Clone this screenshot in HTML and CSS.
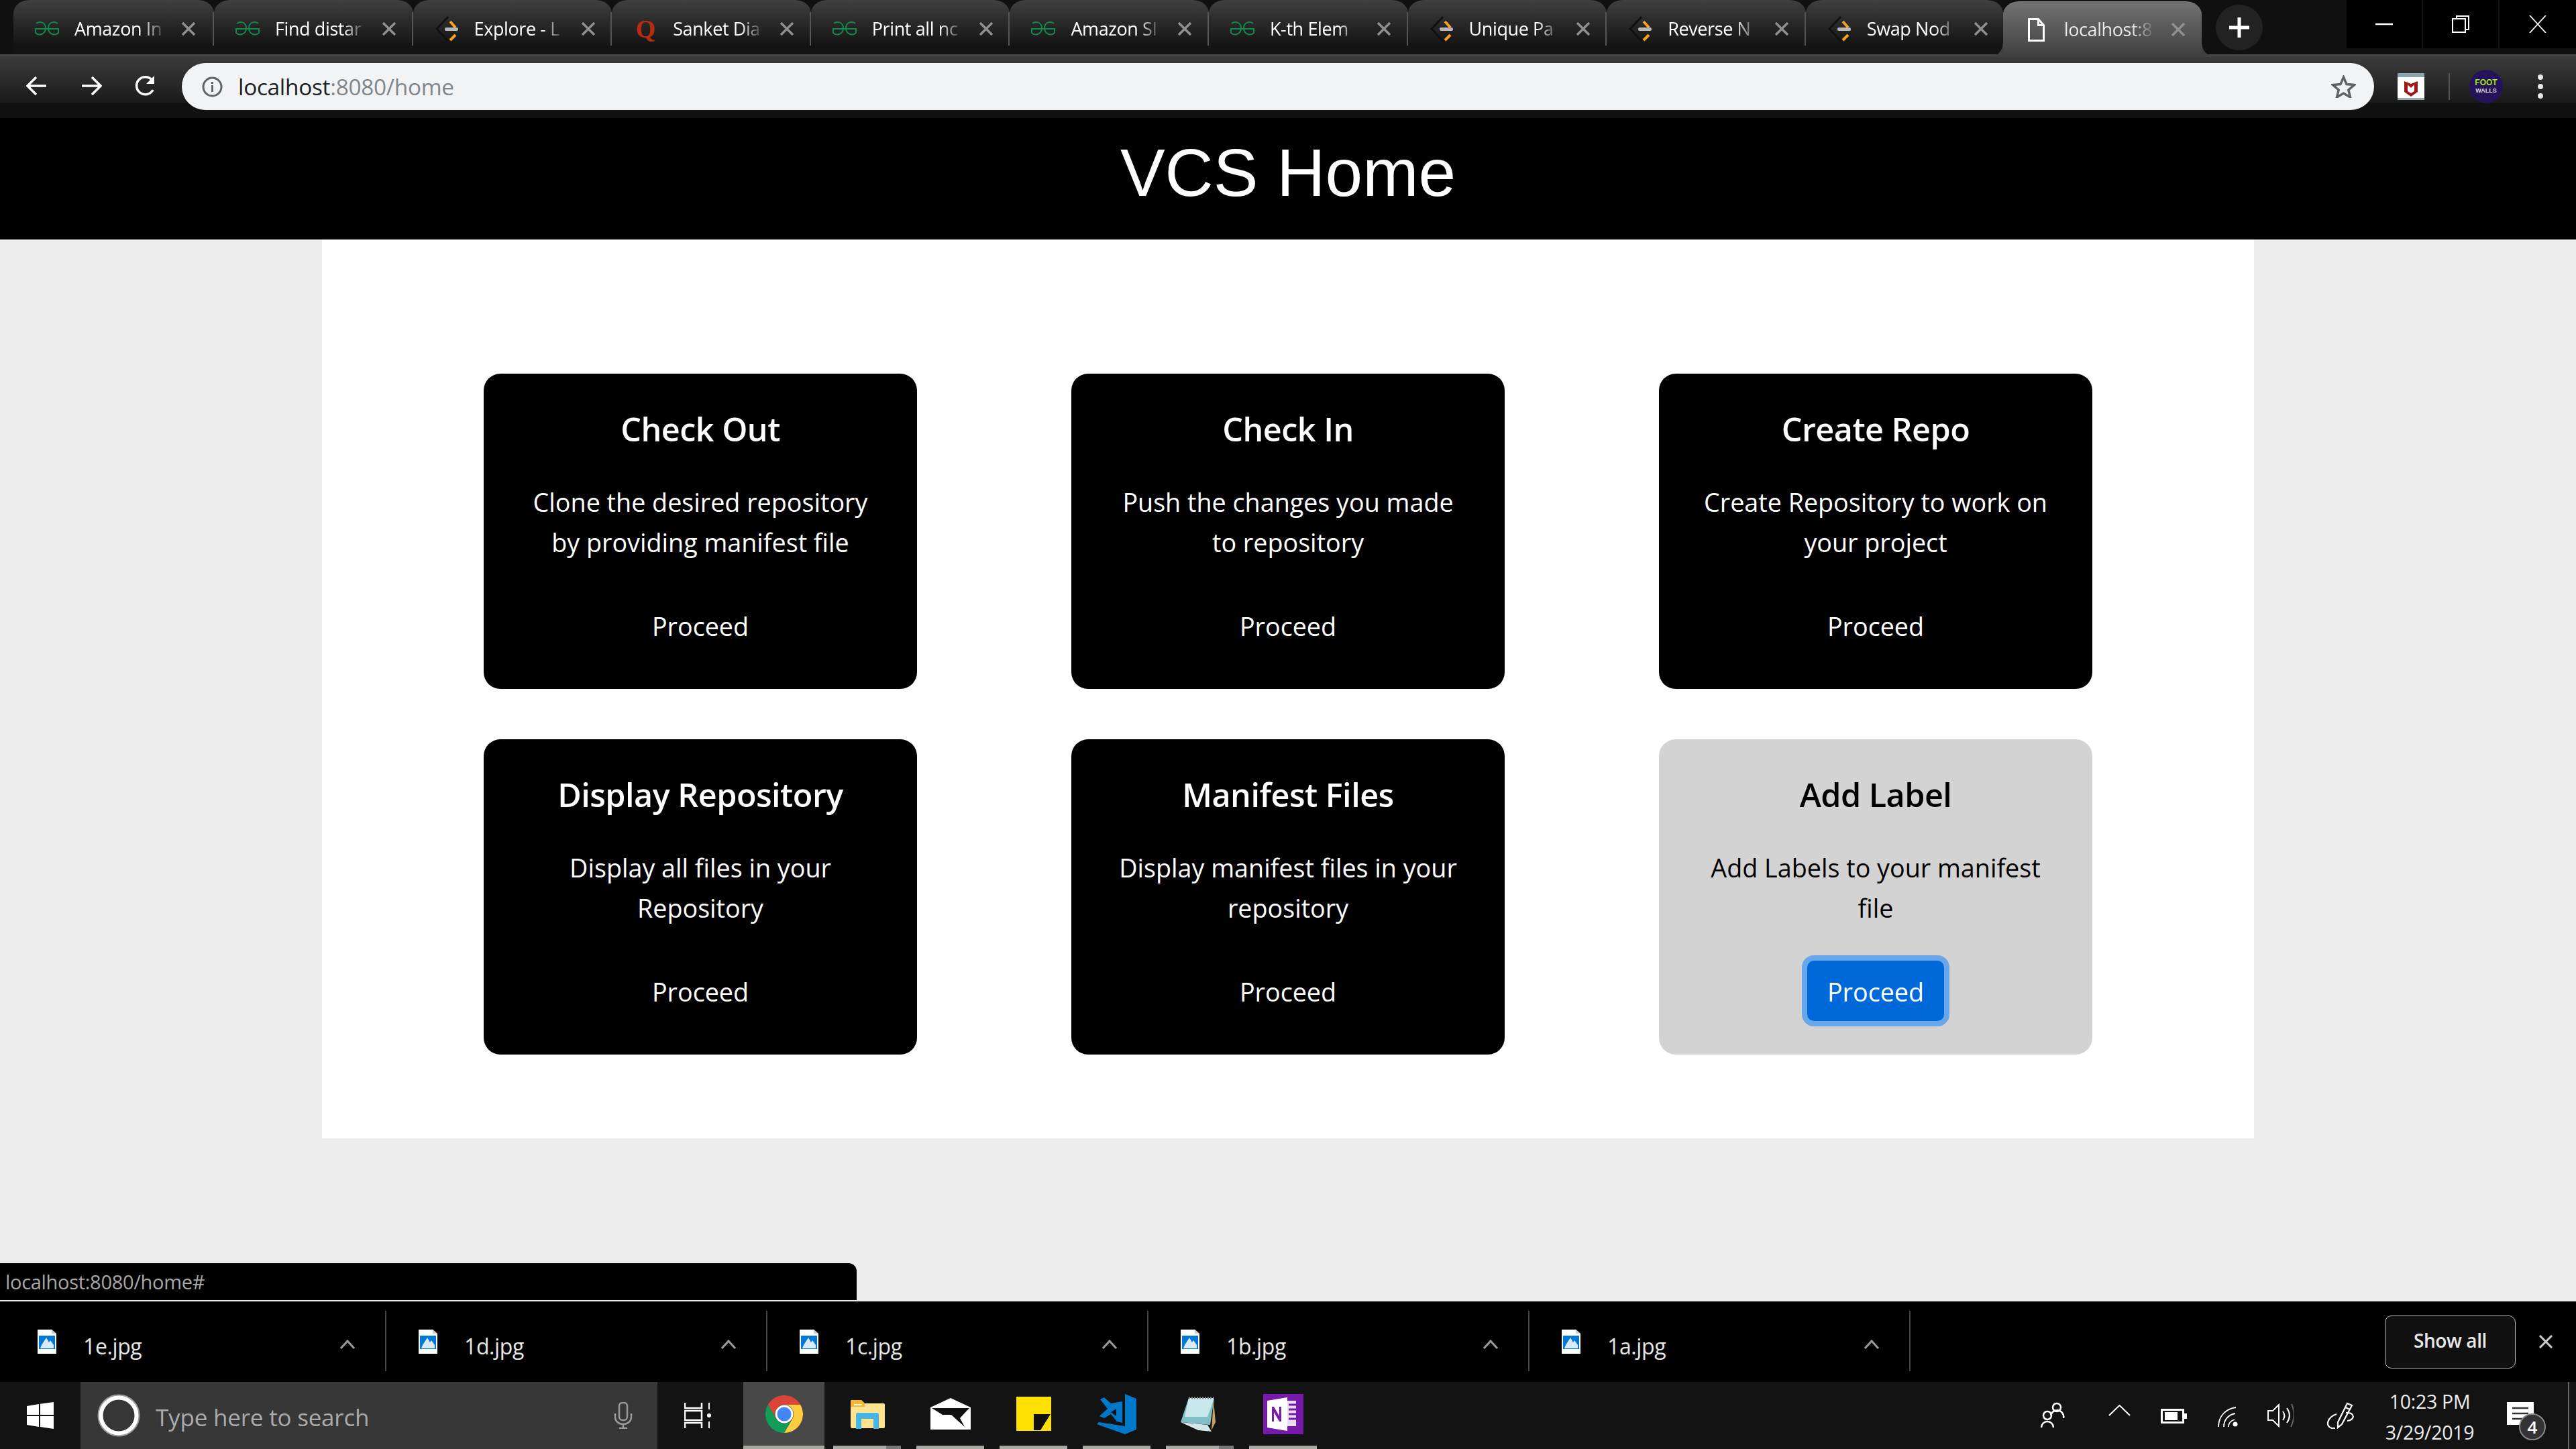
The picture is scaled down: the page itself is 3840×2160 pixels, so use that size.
FILE: index.html
```html
<!DOCTYPE html>
<html lang="en">
<head>
<meta charset="utf-8">
<title>VCS Home</title>
<link rel="stylesheet" href="styles.css">
</head>
<body>
<svg class="defs" width="0" height="0" aria-hidden="true">
  <symbol id="gfg" viewBox="0 0 40 21"><path d="M36 3C31-1 22 1 22 10c0 9 10 12 15 7v-6H3v6c5 5 15 2 15-7C18 1 9-1 4 3" fill="none" stroke="#0f8a4a" stroke-width="2"/></symbol>
  <symbol id="lc" viewBox="0 0 35 40"><path d="M19 2 2 20l17 18" fill="none" stroke="#111" stroke-width="3"/><path d="M22 9l8 9M22 37l8-8" fill="none" stroke="#f7a21b" stroke-width="4"/><rect x="14" y="18" width="20" height="5" rx="2" fill="#b7b7b7"/></symbol>
  <symbol id="x" viewBox="0 0 22 20"><path d="M2 1l18 18M20 1 2 19" fill="none" stroke="#8f8f8f" stroke-width="3.5"/></symbol>
  <symbol id="img" viewBox="0 0 28 36"><path d="M0 0h21l7 6v30H0z" fill="#fff"/><path d="M21 0v6h7" fill="#cfcfcf"/><rect x="2" y="9" width="24" height="20" fill="#0078d7"/><path d="M6 23l7-11 4 7 2-3 5 7v5H4z" fill="#fff" opacity=".85"/></symbol>
  <symbol id="chev" viewBox="0 0 24 14"><path d="M2 13 12 2l10 11" fill="none" stroke="#9a9a9a" stroke-width="3"/></symbol>
</svg>

<div class="app-root">
  <div class="tabstrip">
    <div class="tab tab-first"><svg class="ico ico-gfg"><use href="#gfg"/></svg><span class="tab-title">Amazon In</span><svg class="close"><use href="#x"/></svg></div>
    <div class="tab"><svg class="ico ico-gfg"><use href="#gfg"/></svg><span class="tab-title">Find distar</span><svg class="close"><use href="#x"/></svg></div>
    <div class="tab"><svg class="ico ico-lc"><use href="#lc"/></svg><span class="tab-title">Explore - L</span><svg class="close"><use href="#x"/></svg></div>
    <div class="tab"><span class="ico ico-q">Q</span><span class="tab-title">Sanket Dia</span><svg class="close"><use href="#x"/></svg></div>
    <div class="tab"><svg class="ico ico-gfg"><use href="#gfg"/></svg><span class="tab-title">Print all nc</span><svg class="close"><use href="#x"/></svg></div>
    <div class="tab"><svg class="ico ico-gfg"><use href="#gfg"/></svg><span class="tab-title">Amazon SI</span><svg class="close"><use href="#x"/></svg></div>
    <div class="tab"><svg class="ico ico-gfg"><use href="#gfg"/></svg><span class="tab-title">K-th Elem</span><svg class="close"><use href="#x"/></svg></div>
    <div class="tab"><svg class="ico ico-lc"><use href="#lc"/></svg><span class="tab-title">Unique Pa</span><svg class="close"><use href="#x"/></svg></div>
    <div class="tab"><svg class="ico ico-lc"><use href="#lc"/></svg><span class="tab-title">Reverse N</span><svg class="close"><use href="#x"/></svg></div>
    <div class="tab tab-last"><svg class="ico ico-lc"><use href="#lc"/></svg><span class="tab-title">Swap Nod</span><svg class="close"><use href="#x"/></svg></div>
    <div class="tab tab-active"><svg class="ico ico-doc" viewBox="0 0 25 35"><path d="M1.500 1.500h14l8 9v23h-22zM15.500 1.500v9h8" fill="none" stroke="#fff" stroke-width="3"/></svg><span class="tab-title">localhost:8</span><svg class="close"><use href="#x"/></svg></div>
    <div class="newtab"><svg class="plus" viewBox="0 0 30 30"><path d="M15 0v30M0 15h30" stroke="#fff" stroke-width="5"/></svg></div>
    <div class="winctl">
      <div class="winbtn"><svg class="win-ico" viewBox="0 0 26 26"><path d="M0 13h26" stroke="#fff" stroke-width="2.500"/></svg></div>
      <div class="winbtn"><svg class="win-ico" viewBox="0 0 26 26"><path d="M7 5V1h18v20h-5M1 5h19v20H1z" fill="none" stroke="#fff" stroke-width="2"/></svg></div>
      <div class="winbtn"><svg class="win-ico" viewBox="0 0 26 26"><path d="M1 0l24 26M25 0 1 26" stroke="#fff" stroke-width="1.800"/></svg></div>
    </div>
  </div>

  <div class="toolbar">
    <svg class="nav-ico" viewBox="0 0 32 30"><path d="M30 15H3M15 2 2 15l13 13" fill="none" stroke="#fff" stroke-width="3.500"/></svg>
    <svg class="nav-ico" viewBox="0 0 32 30"><path d="M2 15h27M17 2l13 13-13 13" fill="none" stroke="#fff" stroke-width="3.500"/></svg>
    <svg class="nav-ico" viewBox="0 0 32 30"><path d="M27 21a13 13 0 1 1-1-14" fill="none" stroke="#fff" stroke-width="3.500"/><path d="M29 0v12H17z" fill="#fff"/></svg>
    <div class="omnibox">
      <svg class="info" viewBox="0 0 31 31"><circle cx="15.500" cy="15.500" r="13.500" fill="none" stroke="#5f6368" stroke-width="3"/><path d="M15.500 13v10M15.500 8v3" stroke="#5f6368" stroke-width="3"/></svg>
      <span class="url"><span class="url-host">localhost</span>:8080/home</span>
      <svg class="star" viewBox="0 0 37 34"><path d="M18.500 3l4.500 10.500 11.500 1-8.700 7.500 2.700 11-10-6-10 6 2.700-11L2.500 14.500l11.500-1z" fill="none" stroke="#5f6368" stroke-width="3.500"/></svg>
    </div>
    <svg class="ext-mcafee" viewBox="0 0 40 40"><rect width="40" height="40" rx="2" fill="#fff"/><rect width="40" height="6" fill="#8ba3ad"/><rect y="37" width="40" height="3" fill="#9aa5aa"/><path d="M10 12l10 4 10-4v16l-10 7-10-7z" fill="#a31515"/><path d="M15 17v10l5 3 5-3V17l-5 5z" fill="#fff"/></svg>
    <div class="tool-sep"></div>
    <div class="ext-foot"><span class="foot-a">FOOT</span><span class="foot-b">WALLS</span></div>
    <svg class="menu" viewBox="0 0 8 36"><circle cx="4" cy="4" r="4" fill="#e6e6e6"/><circle cx="4" cy="18" r="4" fill="#e6e6e6"/><circle cx="4" cy="32" r="4" fill="#e6e6e6"/></svg>
  </div>

  <header class="hero"><h1 class="hero-title">VCS Home</h1></header>

  <main class="sheet">
    <section class="card"><h5 class="card-title">Check Out</h5><p class="card-text">Clone the desired repository by providing manifest file</p><a class="btn">Proceed</a></section>
    <section class="card"><h5 class="card-title">Check In</h5><p class="card-text">Push the changes you made to repository</p><a class="btn">Proceed</a></section>
    <section class="card"><h5 class="card-title">Create Repo</h5><p class="card-text">Create Repository to work on your project</p><a class="btn">Proceed</a></section>
    <section class="card"><h5 class="card-title">Display Repository</h5><p class="card-text">Display all files in your Repository</p><a class="btn">Proceed</a></section>
    <section class="card"><h5 class="card-title">Manifest Files</h5><p class="card-text">Display manifest files in your repository</p><a class="btn">Proceed</a></section>
    <section class="card card-hover"><h5 class="card-title">Add Label</h5><p class="card-text">Add Labels to your manifest file</p><a class="btn btn-focus">Proceed</a></section>
  </main>

  <div class="spacer"></div>
  <div class="status">localhost:8080/home#</div>

  <div class="downloads">
    <div class="dl"><svg class="dl-ico"><use href="#img"/></svg><span class="dl-name">1e.jpg</span><svg class="dl-chev"><use href="#chev"/></svg></div>
    <div class="dl"><svg class="dl-ico"><use href="#img"/></svg><span class="dl-name">1d.jpg</span><svg class="dl-chev"><use href="#chev"/></svg></div>
    <div class="dl"><svg class="dl-ico"><use href="#img"/></svg><span class="dl-name">1c.jpg</span><svg class="dl-chev"><use href="#chev"/></svg></div>
    <div class="dl"><svg class="dl-ico"><use href="#img"/></svg><span class="dl-name">1b.jpg</span><svg class="dl-chev"><use href="#chev"/></svg></div>
    <div class="dl"><svg class="dl-ico"><use href="#img"/></svg><span class="dl-name">1a.jpg</span><svg class="dl-chev"><use href="#chev"/></svg></div>
    <div class="showall">Show all</div>
    <svg class="dl-close" viewBox="0 0 22 20"><path d="M2 1l18 18M20 1 2 19" fill="none" stroke="#ccc" stroke-width="3"/></svg>
  </div>

  <div class="taskbar">
    <div class="start"><svg class="win-logo" viewBox="0 0 40 40"><path d="M0 6l18-3v16H0zM20 2.700 40 0v19H20zM0 21h18v16L0 34zM20 21h20v19l-20-3z" fill="#fff"/></svg></div>
    <div class="search">
      <svg class="cortana" viewBox="0 0 64 64"><circle cx="32" cy="32" r="27" fill="none" stroke="#fff" stroke-width="7"/><circle cx="32" cy="32" r="30.500" fill="none" stroke="#999" stroke-width="2"/></svg>
      <span class="search-text">Type here to search</span>
      <svg class="mic" viewBox="0 0 28 40"><rect x="8" y="1" width="12" height="26" rx="5" fill="none" stroke="#9a9a9a" stroke-width="2.500"/><path d="M2 17v6a12 10 0 0 0 24 0v-6M14 33v5M8 39h12" fill="none" stroke="#9a9a9a" stroke-width="2.500"/></svg>
    </div>
    <div class="taskview"><svg class="tv-ico" viewBox="0 0 40 38"><path d="M1 0v8h25V0M1 38v-8h25v8M1 12h25v14H1z" fill="none" stroke="#fff" stroke-width="2.500"/><path d="M37 0v10M37 28v10" stroke="#fff" stroke-width="2"/><circle cx="37" cy="19" r="3" fill="#fff"/></svg></div>
    <div class="app app-chrome"><svg class="a-chrome" viewBox="0 0 48 48"><path d="M24 0A24 24 0 0 1 44.800 12H24A12 12 0 0 0 13.600 30L3.200 12A24 24 0 0 1 24 0Z" fill="#db4437"/><path d="M44.800 12A24 24 0 0 1 24 48L34.400 30A12 12 0 0 0 24 12Z" fill="#ffcd40"/><path d="M24 48A24 24 0 0 1 3.200 12L13.600 30A12 12 0 0 0 34.400 30Z" fill="#0f9d58"/><circle cx="24" cy="24" r="11.500" fill="#fff"/><circle cx="24" cy="24" r="9" fill="#4285f4"/></svg></div>
    <div class="app app-split"><svg class="a-folder" viewBox="0 0 52 44"><path d="M1 3a2 2 0 0 1 2-2h14l5 5h28a2 2 0 0 1 2 2v33a2 2 0 0 1-2 2H3a2 2 0 0 1-2-2z" fill="#ffe48f"/><path d="M1 3a2 2 0 0 1 2-2h14l5 5v5H1z" fill="#f8b62d"/><rect x="6" y="7" width="12" height="2" fill="#fff"/><path d="M9 44V23a3 3 0 0 1 3-3h28a3 3 0 0 1 3 3v21h-8V29H17v15z" fill="#44b6e8"/></svg></div>
    <div class="app"><svg class="a-mail" viewBox="0 0 60 47"><path d="M30 0l30 14v33H0V14z" fill="#fff"/><path d="M2 15h56L44 30l7 13-20-18-13 0z" fill="#111"/></svg></div>
    <div class="app"><svg class="a-sticky" viewBox="0 0 52 51"><rect width="52" height="51" fill="#ffe000"/><path d="M26 26h25L36 50H26z" fill="#111"/></svg></div>
    <div class="app"><svg class="a-vs" viewBox="0 0 60 60"><path d="M42 0l17 7v46L42 60 0 45l3-3 39 6z" fill="#0078c9"/><path d="M38 11v32l-8-2L21 30l-10 6-7-3 12-11L5 8l6-3 10 9zM29 22l-8 5 8 6z" fill="#0078c9" fill-rule="evenodd"/></svg></div>
    <div class="app app-split"><svg class="a-note" viewBox="0 0 56 52"><path d="M16 2h38l-6 40-44-4z" fill="#7fc0c8"/><path d="M16 2h38l-10 28H10z" fill="#c9e8ec"/><path d="M4 38l40 4 6 10-20-2z" fill="#d5e4e6"/><path d="M53 6l3 32-6 12z" fill="#c8a25a"/><path d="M16 2h38" stroke="#888" stroke-width="3" stroke-dasharray="2 2"/></svg></div>
    <div class="app"><svg class="a-one" viewBox="0 0 60 60"><rect width="60" height="60" fill="#7719aa"/><path d="M6 10l30-5v50L6 50z" fill="#fff"/><path d="M36 10h13v38H36z" fill="#fff" opacity=".85"/><path d="M38 16h12M38 23h12M38 30h12M38 37h12" stroke="#7719aa" stroke-width="3"/><path d="M13 41V19h3l8 14V19h3v22h-3l-8-14v14z" fill="#7719aa"/></svg></div>

    <div class="tray">
      <svg class="t-people" viewBox="0 0 37 38"><circle cx="25" cy="8" r="6" fill="none" stroke="#fff" stroke-width="2.500"/><path d="M16 20a9 9 0 0 1 19 4" fill="none" stroke="#fff" stroke-width="2.500"/><circle cx="11" cy="20" r="6" fill="none" stroke="#fff" stroke-width="2.500"/><path d="M2 38a9 9 0 0 1 18 0" fill="none" stroke="#fff" stroke-width="2.500"/></svg>
      <svg class="t-chev" viewBox="0 0 33 17"><path d="M1 16 16.500 1 32 16" fill="none" stroke="#fff" stroke-width="2"/></svg>
      <svg class="t-batt" viewBox="0 0 39 22"><rect x="1.500" y="1.500" width="32" height="19" fill="none" stroke="#fff" stroke-width="3"/><rect x="6" y="5" width="19" height="12" fill="#fff"/><rect x="35" y="7" width="4" height="8" fill="#fff"/></svg>
      <svg class="t-wifi" viewBox="0 0 30 30"><path d="M1 30C1 14 12 3 27 1M9 30c0-11 7-18 17-20M16 30c0-5 3-9 9-11" fill="none" stroke="#fff" stroke-width="1.800"/><circle cx="26" cy="26" r="3.500" fill="#fff"/></svg>
      <svg class="t-vol" viewBox="0 0 39 36"><path d="M1 11h7l9-9v32l-9-9H1z" fill="none" stroke="#fff" stroke-width="2"/><path d="M23 12c3 4 3 9 0 13" fill="none" stroke="#fff" stroke-width="2"/><path d="M29 7c5 7 5 15 0 22" fill="none" stroke="#fff" stroke-width="2"/><path d="M36 1c5 10 4 24-1 34" fill="none" stroke="#666" stroke-width="2"/></svg>
      <svg class="t-pen" viewBox="0 0 42 40"><path d="M17 30 31 2l7 3-15 28-6 5zM28 8l7 3" fill="none" stroke="#fff" stroke-width="2.200"/><path d="M29 16c14-1 14 11 2 12M15 18C2 22-3 36 8 39h5" fill="none" stroke="#fff" stroke-width="2.200"/></svg>
      <div class="clock"><span>10:23 PM</span><span>3/29/2019</span></div>
      <div class="notify">
        <svg class="n-ico" viewBox="0 0 40 34"><path d="M0 0h40v34H0z" fill="#fff"/><path d="M8 9h24M8 17h24M8 25h24" stroke="#333" stroke-width="2.500"/></svg>
        <span class="n-badge">4</span>
      </div>
      <div class="desk-line"></div>
    </div>
  </div>
</div>
</body>
</html>
```
FILE: styles.css
```css
* { box-sizing: border-box; }
html, body { margin: 0; padding: 0; height: 100%; overflow: hidden; background: #ededed; font-family: "Open Sans", "Noto Sans", sans-serif; }
.defs { display: block; height: 0; }
.app-root { display: flex; flex-direction: column; width: 3840px; height: 2160px; }

/* tabs */
.tabstrip { display: flex; height: 83px; flex: none; padding-left: 20px; background: #101010; border-bottom: 2px solid #4a4a4a; }
.tab { display: flex; align-items: center; flex: none; width: 296.6px; height: 81px; padding: 4px 0 0 30px; border-radius: 24px 24px 0 0 / 20px 20px 0 0; background: linear-gradient(#404040, #2a2a2a 40%, #131313 85%); position: relative; color: #fff; }
.tab-first { width: 299px; }
.tab::after { content: ""; position: absolute; right: 0; top: 18px; width: 2px; height: 50px; background: #555; }
.tab-last { width: 294px; }
.tab-last::after { display: none; }
.ico { flex: none; width: 40px; }
.ico-gfg { height: 21px; }
.ico-lc { width: 35px; height: 40px; margin: 0 2px 0 3px; }
.ico-doc { width: 25px; height: 35px; margin: 0 8px 0 7px; }
.ico-q { font: bold 38px/40px "Liberation Serif", serif; color: #b92b10; text-align: center; }
.tab-title { flex: none; width: 139px; margin-left: 21px; font-size: 27px; letter-spacing: -0.4px; line-height: 40px; white-space: nowrap; overflow: hidden; -webkit-mask-image: linear-gradient(to right, #000 72%, transparent 98%); mask-image: linear-gradient(to right, #000 72%, transparent 98%); }
.close { flex: none; width: 22px; height: 20px; margin-left: 20px; }
.tab-active { width: 296px; height: 83px; margin-top: 2px; margin-bottom: -2px; padding-top: 0; background: linear-gradient(#727272, #3f3f3f); border-top: 1px solid #888; }
.tab-active::before, .tab-active::after { content: ""; display: block; position: absolute; top: auto; bottom: 0; width: 20px; height: 20px; }
.tab-active::before { left: -20px; background: radial-gradient(circle at 0 0, transparent 19px, #404040 20px); }
.tab-active::after { right: -20px; background: radial-gradient(circle at 100% 0, transparent 19px, #404040 20px); }
.tab-active .tab-title { color: #e8e8e8; }
.newtab { flex: none; display: flex; align-items: center; justify-content: center; width: 70px; height: 68px; margin: 7px 0 0 21px; border-radius: 50%; background: #222; }
.plus { width: 30px; height: 30px; }
.winctl { display: flex; height: 72px; margin-left: auto; background: #000; }
.winbtn { display: flex; align-items: center; justify-content: center; width: 114px; border-right: 2px solid #141414; }
.winbtn:last-child { border-right: 0; }
.win-ico { width: 26px; height: 26px; }

/* toolbar */
.toolbar { display: flex; align-items: flex-start; flex: none; height: 93px; padding-left: 39px; background: linear-gradient(#3c3c3c, #1a1a1a 75%, #111 76%); }
.nav-ico { flex: none; width: 32px; height: 30px; margin: 30px 49px 0 0; }
.omnibox { display: flex; align-items: center; flex: none; width: 3268px; height: 70px; margin: 11px 0 0 -11px; padding: 0 27px 0 30px; border-radius: 35px; background: #f1f3f4; }
.info { flex: none; width: 31px; height: 31px; }
.url { margin-left: 23px; font-size: 33.4px; letter-spacing: -0.3px; color: #80868b; }
.url-host { color: #202124; }
.star { flex: none; width: 37px; height: 34px; margin-left: auto; }
.ext-mcafee { flex: none; width: 40px; height: 40px; margin: 26px 0 0 35px; }
.tool-sep { flex: none; width: 2px; height: 40px; margin: 26px 0 0 36px; background: #555; }
.ext-foot { flex: none; display: flex; flex-direction: column; align-items: center; justify-content: center; width: 50px; height: 50px; margin: 21px 0 0 29px; border-radius: 50%; background: #24135a; font: bold 12px/13px "Liberation Sans", sans-serif; }
.foot-a { color: #a6e21a; }
.foot-b { color: #ddd; font-size: 9px; line-height: 11px; }
.menu { flex: none; width: 8px; height: 36px; margin: 28px 0 0 52px; }

/* page */
.hero { flex: none; display: flex; align-items: center; justify-content: center; height: 181px; padding-bottom: 20px; background: #000; }
.hero-title { margin: 0; font: 400 100px/1.2 "Liberation Sans", sans-serif; color: #fff; }
.sheet { flex: none; display: grid; grid-template-columns: repeat(3, 646px); column-gap: 230px; row-gap: 75px; justify-content: center; width: 2880px; margin: 0 auto; padding: 200px 0 125px; background: #fff; }
.card { display: flex; flex-direction: column; align-items: center; height: 470px; padding: 52px 50px 50px; border-radius: 25px; background: #000; color: #fff; text-align: center; }
.card-title { margin: 0; font-size: 48.5px; line-height: 60px; font-weight: 600; letter-spacing: -0.5px; }
.card-text { flex: none; max-width: 530px; height: 120px; margin: 49.500px 0 48.500px; font-size: 37.7px; line-height: 60px; }
.btn { display: flex; align-items: center; justify-content: center; width: 204px; height: 90px; padding-top: 2px; border-radius: 10px; font-size: 37.7px; }
.card-hover { background: #d3d3d3; color: #000; }
.btn-focus { background: #0069d9; color: #fff; box-shadow: 0 0 0 8px #6aa7ea; }

/* bottom */
.spacer { flex: 1; }
.status { flex: none; width: 1277px; height: 55px; padding-left: 8px; border-radius: 0 12px 0 0; background: #000; color: #a8a8a8; font-size: 29px; line-height: 55px; letter-spacing: -0.3px; }
.downloads { display: flex; align-items: center; flex: none; height: 122px; border-top: 2px solid #ededed; background: #000; color: #e8e8e8; }
.dl { flex: none; display: flex; align-items: center; width: 568px; height: 90px; margin-top: -2px; padding-left: 48px; border-right: 2px solid #444; }
.dl:first-child { width: 576px; padding-left: 56px; }
.dl-ico { flex: none; width: 28px; height: 36px; margin-top: 2px; }
.dl-name { flex: none; width: 372px; margin: 14px 0 0 40px; font-size: 32px; letter-spacing: -0.4px; }
.dl-chev { flex: none; width: 24px; height: 14px; margin: 10px 0 0 10px; }
.showall { flex: none; width: 195px; height: 79px; margin-left: auto; border: 1.5px solid #bbb; border-radius: 10px; background: #111; font-size: 28px; font-weight: 600; line-height: 72px; text-align: center; letter-spacing: -0.4px; }
.dl-close { flex: none; width: 22px; height: 20px; margin: 0 34px; }

.taskbar { display: flex; flex: none; height: 100px; background: #131313; color: #fff; }
.start { flex: none; display: flex; align-items: center; justify-content: center; width: 120px; }
.win-logo { width: 40px; height: 40px; }
.search { flex: none; display: flex; align-items: center; width: 860px; padding-left: 25px; background: #373737; color: #aaa; }
.cortana { flex: none; width: 64px; height: 64px; }
.search-text { flex: none; width: 683px; margin: 4px 0 0 23px; font-size: 35px; letter-spacing: -0.2px; }
.mic { flex: none; width: 28px; height: 40px; }
.taskview { flex: none; display: flex; align-items: center; padding-left: 40px; width: 128px; }
.tv-ico { width: 40px; height: 38px; }
.app { flex: none; display: flex; align-items: center; justify-content: center; width: 101px; margin-right: 23px; padding-bottom: 5px; background: linear-gradient(#aaa8a2, #aaa8a2) bottom / 100% 5px no-repeat; }
.app-split { background: linear-gradient(to right, #aaa8a2 78%, #777 78%) bottom / 100% 5px no-repeat; }
.app-chrome { width: 121px; margin-right: 13px; background: linear-gradient(#aaa8a2, #aaa8a2) bottom / 100% 5px no-repeat, #484848; }
.a-chrome { width: 56px; height: 56px; }
.a-folder { width: 52px; height: 44px; }
.a-mail { width: 60px; height: 47px; }
.a-sticky { width: 52px; height: 51px; }
.a-vs { width: 60px; height: 60px; }
.a-note { width: 56px; height: 52px; margin-right: 10px; }
.a-one { width: 60px; height: 60px; }
.tray { flex: 1; display: flex; align-items: center; padding-left: 1055px; }
.t-people { flex: none; width: 37px; height: 38px; margin-top: -2px; }
.t-chev { flex: none; width: 33px; height: 17px; margin: -15px 0 0 65px; }
.t-batt { flex: none; width: 39px; height: 22px; margin: 2px 0 0 45px; }
.t-wifi { flex: none; width: 30px; height: 30px; margin: 4px 0 0 46px; }
.t-vol { flex: none; width: 39px; height: 36px; margin-left: 44px; }
.t-pen { flex: none; width: 42px; height: 40px; margin-left: 49px; }
.clock { flex: none; display: flex; flex-direction: column; align-items: center; gap: 16px; width: 160px; margin: 4px 0 0 32px; font-size: 28.5px; line-height: 30px; letter-spacing: -0.3px; color: #eee; }
.notify { flex: none; position: relative; width: 40px; height: 34px; margin: -6px 0 0 35px; }
.n-ico { display: block; width: 40px; height: 34px; }
.n-badge { position: absolute; left: 18px; top: 17px; width: 40px; height: 40px; border: 2px solid #888; border-radius: 50%; background: #333; font-size: 26px; font-weight: 600; line-height: 36px; text-align: center; }
.desk-line { flex: none; width: 2px; height: 100px; margin-left: 51px; background: #666; }
```
